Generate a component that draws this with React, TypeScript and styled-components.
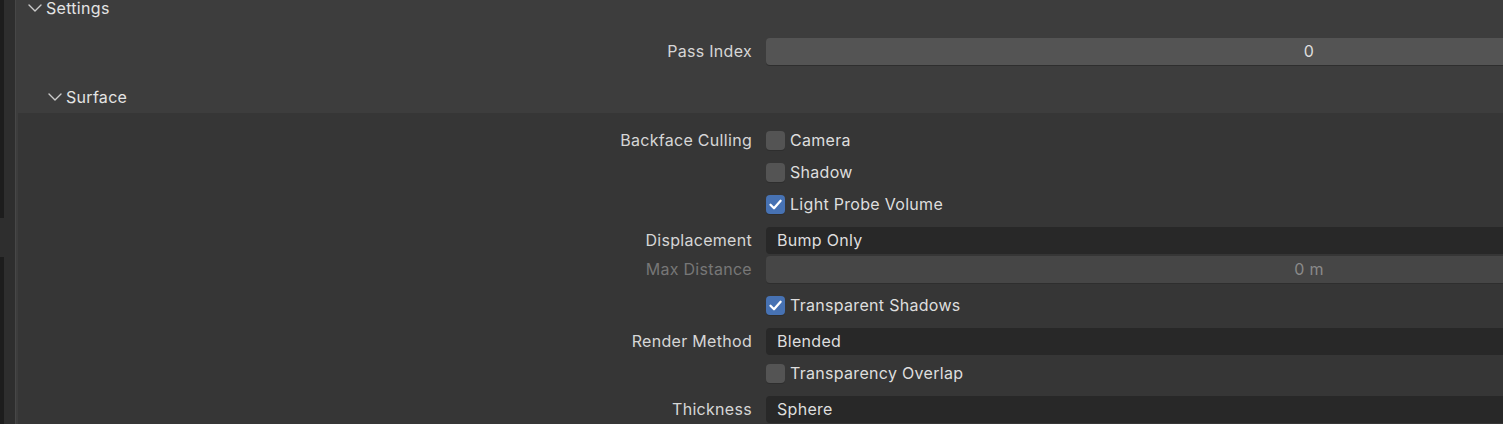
import React from 'react'
import styled, { createGlobalStyle } from 'styled-components'

const GlobalStyle = createGlobalStyle`
  html, body {
    margin: 0;
    padding: 0;
    background: #3d3d3d;
    overflow: hidden;
  }
  body {
    font-family: Inter, "Noto Sans", sans-serif;
    font-size: 16px;
    letter-spacing: 0.3px;
    color: #dcdcdc;
  }
`

type CheckItem = { label?: string; text: string; checked: boolean; top?: number }
type FieldItem = { label: string; kind: 'menu' | 'number' | 'disabled'; value: string; top?: number }

const Chevron = () => (
  <svg width="14" height="8" viewBox="0 0 14 8">
    <path d="M1 1 L7 7 L13 1" fill="none" stroke="#cbcbcb" strokeWidth="1.4" strokeLinecap="round" strokeLinejoin="round" />
  </svg>
)

const Tick = () => (
  <svg width="19" height="19" viewBox="0 0 19 19">
    <path d="M4.5 9.8 L8 13.2 L14.6 5.8" fill="none" stroke="#ffffff" strokeWidth="2.3" strokeLinecap="round" strokeLinejoin="round" />
  </svg>
)

const CheckRow = ({ label, text, checked, top = 0 }: CheckItem) => (
  <StyledRow $height={32} $top={top}>
    <StyledLabel>{label}</StyledLabel>
    <StyledCheckWrap>
      <StyledCheckbox $checked={checked}>{checked && <Tick />}</StyledCheckbox>
      <StyledCheckText>{text}</StyledCheckText>
    </StyledCheckWrap>
  </StyledRow>
)

const FieldRow = ({ label, kind, value, top = 0 }: FieldItem) => (
  <StyledRow $height={27} $top={top}>
    <StyledLabel $disabled={kind === 'disabled'}>{label}</StyledLabel>
    <StyledField $kind={kind}>{value}</StyledField>
  </StyledRow>
)

const App = () => {
  return (
    <>
      <GlobalStyle />
      <StyledFrame>
        <StyledRail>
          <StyledRailBlock $height={218} />
          <StyledRailGap />
          <StyledRailBlock />
        </StyledRail>
        <StyledPanel>
          <StyledHeader $height={16} $indent={12}>
            <Chevron />
            <StyledTitle>Settings</StyledTitle>
          </StyledHeader>
          <StyledPanelBody>
            <FieldRow label="Pass Index" kind="number" value="0" />
          </StyledPanelBody>
          <StyledSubHeader $height={33} $indent={32}>
            <Chevron />
            <StyledTitle>Surface</StyledTitle>
          </StyledSubHeader>
          <StyledSubBody>
            <CheckRow label="Backface Culling" text="Camera" checked={false} />
            <CheckRow text="Shadow" checked={false} />
            <CheckRow text="Light Probe Volume" checked={true} />
            <FieldRow label="Displacement" kind="menu" value="Bump Only" top={7} />
            <FieldRow label="Max Distance" kind="disabled" value="0 m" top={2} />
            <CheckRow text="Transparent Shadows" checked={true} top={6} />
            <FieldRow label="Render Method" kind="menu" value="Blended" top={7} />
            <CheckRow text="Transparency Overlap" checked={false} top={2} />
            <FieldRow label="Thickness" kind="menu" value="Sphere" top={7} />
          </StyledSubBody>
        </StyledPanel>
      </StyledFrame>
    </>
  )
}

export default App

const StyledFrame = styled.div`
  display: flex;
  width: 1503px;
  height: 424px;
  overflow: hidden;
`
const StyledRail = styled.div`
  display: flex;
  flex-direction: column;
  flex: 0 0 15px;
  background: #2e2e2e;
  border-right: 1px solid #474747;
`
const StyledRailBlock = styled.div<{ $height?: number }>`
  width: 4px;
  background: #1d1d1d;
  ${(p) => (p.$height ? `height: ${p.$height}px;` : 'flex: 1;')}
`
const StyledRailGap = styled.div`
  height: 39px;
`
const StyledPanel = styled.div`
  flex: 1;
  min-width: 0;
  display: flex;
  flex-direction: column;
  background: #3d3d3d;
`
const StyledHeader = styled.div<{ $height: number; $indent: number }>`
  display: flex;
  align-items: center;
  gap: 4px;
  height: ${(p) => p.$height}px;
  padding-left: ${(p) => p.$indent}px;
  color: #e4e4e4;
`
const StyledTitle = styled.span`
  line-height: 16px;
`
const StyledSubHeader = styled(StyledHeader)`
  margin-top: 15px;
`
const StyledPanelBody = styled.div`
  display: flex;
  flex-direction: column;
  padding-top: 22px;
  padding-left: 2px;
`
const StyledSubBody = styled.div`
  display: flex;
  flex-direction: column;
  margin-left: 2px;
  padding-top: 11px;
  flex: 1;
  background: #363636;
`
const StyledRow = styled.div<{ $height: number; $top: number }>`
  display: grid;
  grid-template-columns: 734px 1086px;
  column-gap: 14px;
  align-items: center;
  flex: none;
  height: ${(p) => p.$height}px;
  margin-top: ${(p) => p.$top}px;
`
const StyledLabel = styled.div<{ $disabled?: boolean }>`
  text-align: right;
  white-space: nowrap;
  padding-bottom: 1px;
  color: ${(p) => (p.$disabled ? '#777777' : '#d6d6d6')};
`
const StyledField = styled.div<{ $kind: 'menu' | 'number' | 'disabled' }>`
  height: 27px;
  box-sizing: border-box;
  display: flex;
  align-items: center;
  border-radius: 4px;
  white-space: nowrap;
  padding-bottom: 1px;
  justify-content: ${(p) => (p.$kind === 'menu' ? 'flex-start' : 'center')};
  padding-left: ${(p) => (p.$kind === 'menu' ? 11 : 0)}px;
  background: ${(p) => (p.$kind === 'menu' ? '#282828' : p.$kind === 'number' ? '#545454' : '#464646')};
  color: ${(p) => (p.$kind === 'disabled' ? '#8a8a8a' : '#dedede')};
  box-shadow: ${(p) => (p.$kind === 'menu' ? 'none' : '0 1px 0 #2e2e2e')};
`
const StyledCheckWrap = styled.div`
  display: flex;
  align-items: center;
  gap: 5px;
`
const StyledCheckbox = styled.div<{ $checked: boolean }>`
  width: 19px;
  height: 19px;
  border-radius: 4px;
  display: flex;
  align-items: center;
  justify-content: center;
  background: ${(p) => (p.$checked ? '#4772b3' : '#545454')};
  box-shadow: 0 1px 0 #2e2e2e;
`
const StyledCheckText = styled.span`
  color: #dedede;
  white-space: nowrap;
`
